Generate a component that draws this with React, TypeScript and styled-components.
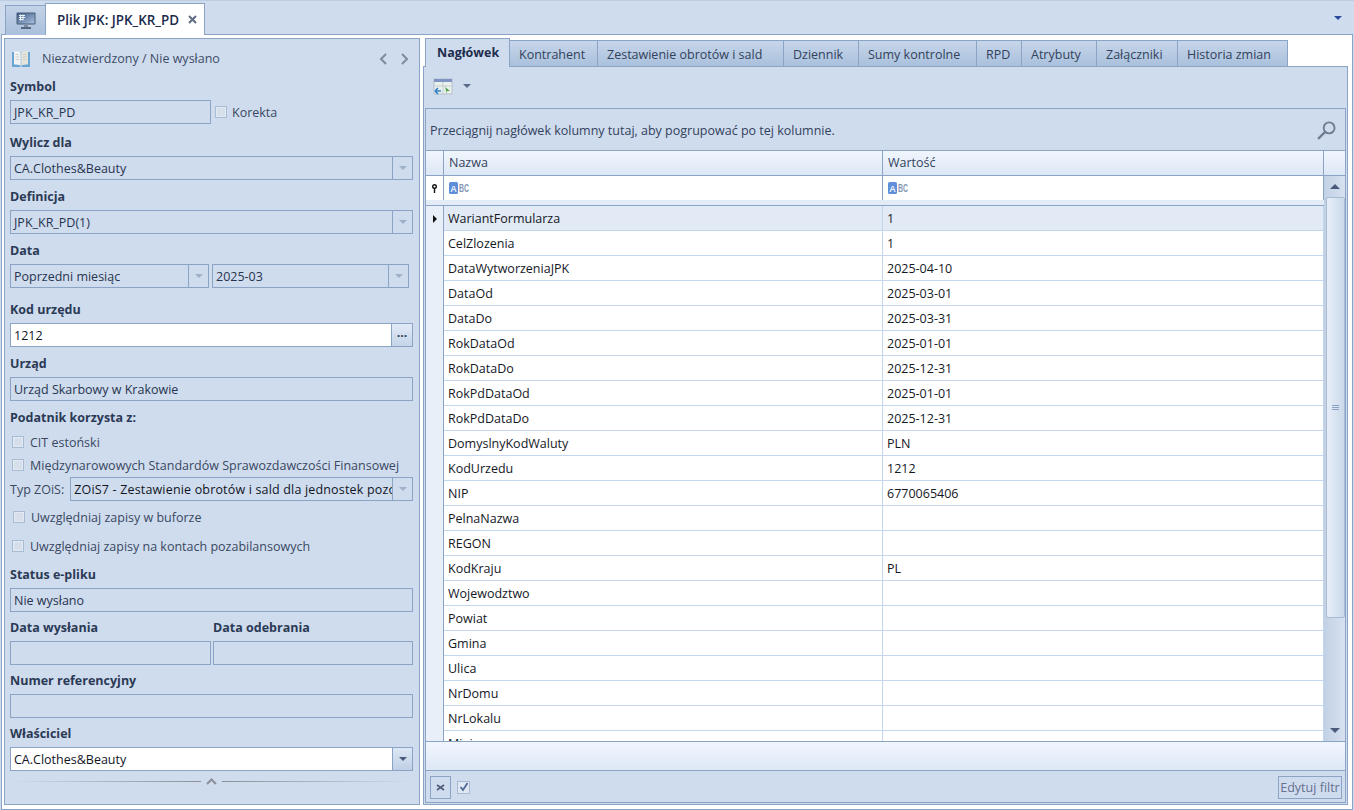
import React from "react";
import styled, { createGlobalStyle } from "styled-components";

const Global = createGlobalStyle`
  html, body { margin: 0; padding: 0; background: #cfdcee; }
  body { font-family: "Open Sans", "Noto Sans", sans-serif; font-size: 12.5px; color: #33425c; }
  * { box-sizing: border-box; }
`;

const LINE = "#8ba3c4";

const Page = styled.div`
  width: 1354px;
  height: 810px;
  overflow: hidden;
  border-top: 1px solid #bccde4;
  background: #cfdcee;
  display: flex;
  flex-direction: column;
`;

const TopStrip = styled.div`
  height: 34px;
  flex: none;
  display: flex;
  align-items: flex-end;
  padding: 0 10px 0 5px;
  margin-bottom: -1px;
  position: relative;
  z-index: 1;
`;

const HomeTab = styled.div`
  width: 41px;
  height: 30px;
  border: 1px solid ${LINE};
  border-bottom: none;
  background: linear-gradient(#c3d3e8, #a9bfdb);
  display: flex;
  align-items: center;
  justify-content: center;
`;

const DocTab = styled.div`
  width: 160px;
  height: 32px;
  margin-left: -1px;
  border: 1px solid ${LINE};
  border-bottom: none;
  background: #fff;
  display: flex;
  align-items: center;
  padding: 0 7px 0 11px;
  font-weight: 600;
  font-size: 13.4px;
  color: #1d2c4c;
  justify-content: space-between;
`;

const StripArrow = styled.div`
  margin-left: auto;
  margin-bottom: 15px;
  margin-right: 2px;
  width: 0;
  height: 0;
  border: 4px solid transparent;
  border-top: 4px solid #2a4a9c;
  border-bottom: none;
`;

const Frame = styled.div`
  margin: 0 1px;
  width: 1352px;
  height: 776px;
  flex: none;
  border: 1px solid ${LINE};
  background: #fff;
  padding: 3px 4px 4px 2px;
  display: flex;
  gap: 3px;
`;

const LeftPanel = styled.div`
  width: 416px;
  border: 1px solid ${LINE};
  background: #cfdcee;
  padding: 0 6px 0 5px;
  display: flex;
  flex-direction: column;
`;

const PanelHead = styled.div`
  height: 37px;
  flex: none;
  display: flex;
  align-items: center;
  padding: 2px 4px 0 1px;
  gap: 11px;
  color: #3e4c66;
`;

const NavArrows = styled.div`
  margin-left: auto;
  display: flex;
  gap: 12px;
`;

const Field = styled.div<{ $mt?: number; $w?: number }>`
  margin-top: ${({ $mt }) => $mt ?? 0}px;
  ${({ $w }) => ($w ? `width: ${$w}px;` : "")}
  display: flex;
  flex-direction: column;
  gap: 4px;
`;

const FieldLabel = styled.div`
  height: 20px;
  line-height: 22px;
  font-weight: 700;
  color: #2b3a55;
`;

const Inline = styled.div<{ $gap?: number; $mt?: number }>`
  display: flex;
  align-items: center;
  gap: ${({ $gap }) => $gap ?? 0}px;
  margin-top: ${({ $mt }) => $mt ?? 0}px;
`;

const Box = styled.div<{ $w?: number; $white?: boolean }>`
  ${({ $w }) => ($w ? `width: ${$w}px; flex: none;` : "width: 100%; flex: 0 1 auto; min-width: 0;")}
  height: 24px;
  border: 1px solid ${LINE};
  background: ${({ $white }) => ($white ? "#fff" : "#cfdcee")};
  display: flex;
  align-items: stretch;
`;

const BoxText = styled.div<{ $dark?: boolean; $spread?: boolean }>`
  flex: 1;
  min-width: 0;
  padding: 0 3px;
  line-height: 24px;
  white-space: nowrap;
  overflow: hidden;
  color: ${({ $dark }) => ($dark ? "#10151f" : "#27344f")};
  letter-spacing: ${({ $spread }) => ($spread ? "0.17px" : "normal")};
`;

const DropBtn = styled.div<{ $active?: boolean }>`
  width: 20px;
  flex: none;
  border-left: 1px solid ${LINE};
  background: ${({ $active }) => ($active ? "linear-gradient(#dde7f4, #bfd0e6)" : "transparent")};
  display: flex;
  align-items: center;
  justify-content: center;
`;

const Caret = styled.span<{ $color?: string }>`
  width: 0;
  height: 0;
  border-left: 4px solid transparent;
  border-right: 4px solid transparent;
  border-top: 4px solid ${({ $color }) => $color ?? "#9fb0c9"};
`;

const Ellipsis = styled.div`
  width: 21px;
  flex: none;
  border-left: 1px solid ${LINE};
  background: linear-gradient(#e2eaf6, #c4d4e9);
  text-align: center;
  line-height: 17px;
  font-weight: 700;
  color: #2c3b58;
`;

const Check = styled.span`
  width: 12px;
  height: 12px;
  flex: none;
  border: 1px solid #a9bad3;
  background: #d6dfea;
  box-shadow: inset 0 0 0 1px #e4eaf2;
`;

const CheckRow = styled.div<{ $mt?: number; $indent?: number }>`
  height: 20px;
  margin-top: ${({ $mt }) => $mt ?? 0}px;
  padding-left: ${({ $indent }) => $indent ?? 1}px;
  display: flex;
  align-items: center;
  gap: 6px;
  color: #3a4862;
  white-space: nowrap;
`;

const Plain = styled.span<{ $ml?: number }>`
  flex: none;
  margin-left: ${({ $ml }) => $ml ?? 0}px;
  color: #3a4862;
  white-space: nowrap;
`;

const Columns = styled.div`
  display: flex;
  gap: 2px;
`;

const Splitter = styled.div`
  margin-top: 4px;
  height: 12px;
  flex: none;
  display: flex;
  align-items: center;
  gap: 5px;
`;

const SplitLine = styled.div<{ $dir: string }>`
  flex: 1;
  height: 1px;
  background: linear-gradient(${({ $dir }) => $dir}, #8c8f96, #cfdcee);
`;

const RightPanel = styled.div`
  flex: 1;
  min-width: 0;
  display: flex;
  flex-direction: column;
`;

const TabRow = styled.div`
  height: 29px;
  flex: none;
  display: flex;
  align-items: flex-end;
  padding-left: 2px;
  margin-bottom: -1px;
  position: relative;
  z-index: 1;
`;

const Tab = styled.div<{ $active?: boolean; $w: number }>`
  width: ${({ $w }) => $w}px;
  flex: none;
  height: ${({ $active }) => ($active ? 29 : 27)}px;
  border: 1px solid ${LINE};
  margin-right: -1px;
  display: flex;
  align-items: center;
  padding: ${({ $active }) => ($active ? "0 0 2px 11px" : "1px 0 0 9px")};
  white-space: nowrap;
  color: ${({ $active }) => ($active ? "#1d2c4c" : "#33425c")};
  font-weight: ${({ $active }) => ($active ? 700 : 400)};
  background: ${({ $active }) => ($active ? "#cfdcee" : "linear-gradient(#c7d6ea, #a9c0dc)")};
  ${({ $active }) => ($active ? "border-bottom: none;" : "")}
`;

const TabPane = styled.div`
  flex: 1;
  min-height: 0;
  border: 1px solid ${LINE};
  background: #cfdcee;
  padding: 0 1px 1px 1px;
  display: flex;
  flex-direction: column;
`;

const Toolbar = styled.div`
  height: 41px;
  flex: none;
  display: flex;
  align-items: center;
  padding: 0 6px 3px 8px;
  gap: 10px;
`;

const GridBox = styled.div`
  flex: 1;
  min-height: 0;
  border: 1px solid ${LINE};
  display: flex;
  flex-direction: column;
  background: #fff;
`;

const GroupBar = styled.div`
  height: 42px;
  flex: none;
  background: #cfdcee;
  border-bottom: 1px solid ${LINE};
  display: flex;
  align-items: center;
  justify-content: space-between;
  padding: 2px 8px 0 4px;
`;

const HeaderRow = styled.div`
  height: 25px;
  flex: none;
  display: grid;
  grid-template-columns: 18px 439px 441px 21px;
  border-bottom: 1px solid ${LINE};
  background: linear-gradient(#f1f6fd, #dce7f5);
`;

const HeadCell = styled.div<{ $last?: boolean }>`
  border-right: ${({ $last }) => ($last ? "none" : `1px solid ${LINE}`)};
  padding-left: 5px;
  line-height: 24px;
`;

const BodyWrap = styled.div`
  flex: 1;
  min-height: 0;
  display: flex;
`;

const BodyMain = styled.div`
  flex: 1;
  min-width: 0;
  display: flex;
  flex-direction: column;
  overflow: hidden;
`;

const FilterRow = styled.div`
  height: 30px;
  flex: none;
  display: grid;
  grid-template-columns: 18px 439px 441px;
  border-bottom: 1px solid ${LINE};
  background: linear-gradient(#fff 24px, #e3ebf6 24px);
`;

const FilterCell = styled.div`
  height: 24px;
  border-right: 1px solid ${LINE};
  display: flex;
  align-items: center;
  padding-left: 5px;
`;

const PinCell = styled.div`
  height: 24px;
  border-right: 1px solid ${LINE};
  background: #fff;
  display: flex;
  align-items: center;
  justify-content: center;
`;

const Row = styled.div<{ $selected?: boolean }>`
  height: 25px;
  flex: none;
  display: grid;
  grid-template-columns: 18px 439px 441px;
  border-bottom: 1px solid #c3d6ee;
  background: ${({ $selected }) => ($selected ? "#e1eaf5" : "#fff")};
`;

const RowMark = styled.div`
  background: #e8eff8;
  border-right: 1px solid ${LINE};
  border-bottom: 1px solid ${LINE};
  margin-bottom: -1px;
  display: flex;
  align-items: center;
  justify-content: center;
`;

const Cell = styled.div`
  border-right: 1px solid #c3d6ee;
  padding-left: 4px;
  line-height: 26px;
  color: #14181f;
  white-space: nowrap;
`;

const MarkArrow = styled.span`
  width: 0;
  height: 0;
  border-top: 4px solid transparent;
  border-bottom: 4px solid transparent;
  border-left: 4px solid #111;
`;

const ScrollBar = styled.div`
  width: 21px;
  flex: none;
  border-left: 1px solid #c1cfe3;
  background: linear-gradient(90deg, #c4d2e6, #d6e1f0);
  display: flex;
  flex-direction: column;
  align-items: center;
`;

const ScrollEnd = styled.div`
  height: 21px;
  flex: none;
  display: flex;
  align-items: center;
  justify-content: center;
`;

const ScrollThumb = styled.div`
  width: 19px;
  height: 421px;
  flex: none;
  border: 1px solid #a9bcd6;
  border-radius: 2px;
  background: linear-gradient(90deg, #e7eef8, #cbd9eb);
  display: flex;
  align-items: center;
  justify-content: center;
`;

const Grip = styled.span`
  width: 7px;
  height: 5px;
  border-top: 1px solid #8ba3c4;
  border-bottom: 1px solid #8ba3c4;
  position: relative;
  &::after {
    content: "";
    position: absolute;
    left: 0;
    right: 0;
    top: 1px;
    height: 1px;
    background: #8ba3c4;
  }
`;

const ScrollSpace = styled.div`
  flex: 1;
`;

const Arrow = styled.span<{ $up?: boolean }>`
  width: 0;
  height: 0;
  border-left: 5px solid transparent;
  border-right: 5px solid transparent;
  ${({ $up }) => ($up ? "border-bottom: 5px solid #4a5a7c;" : "border-top: 5px solid #4a5a7c;")}
`;

const SummaryBar = styled.div`
  height: 30px;
  flex: none;
  border-top: 1px solid ${LINE};
  border-bottom: 1px solid ${LINE};
  background: linear-gradient(#f1f6fd, #dde8f6);
`;

const FilterBar = styled.div`
  height: 31px;
  flex: none;
  background: #cfdcee;
  display: flex;
  align-items: center;
  padding: 1px 3px 0 4px;
  gap: 5px;
`;

const ClearBtn = styled.div`
  width: 21px;
  height: 23px;
  border: 1px solid ${LINE};
  display: flex;
  align-items: center;
  justify-content: center;
`;

const FilterCheck = styled.div`
  width: 13px;
  height: 13px;
  margin-left: 1px;
  border: 1px solid #a9bad3;
  background: #dfe7f2;
  display: flex;
  align-items: center;
  justify-content: center;
`;

const EditBtn = styled.div`
  margin-left: auto;
  width: 64px;
  height: 23px;
  border: 1px solid ${LINE};
  text-align: center;
  line-height: 21px;
  color: #66708f;
  white-space: nowrap;
`;

const MonitorIcon = () => (
  <svg width="20" height="18" viewBox="0 0 20 18">
    <defs>
      <linearGradient id="screen" x1="0" y1="0" x2="1" y2="1">
        <stop offset="0" stopColor="#3f5c86" />
        <stop offset="1" stopColor="#a9c0df" />
      </linearGradient>
    </defs>
    <rect x="0.5" y="0.5" width="19" height="12" rx="1" fill="#4a5d78" />
    <rect x="1.5" y="1.5" width="17" height="10" fill="url(#screen)" />
    <path d="M3 3.5h6M3 5.5h6M3 7.5h4M4.5 2.5v6M7 2.5v6" stroke="#eef3f9" strokeWidth="1" />
    <path d="M8 13h4v2H8z" fill="#7c8ca3" />
    <path d="M5 15h10v2H5z" fill="#56677f" />
  </svg>
);

const BookIcon = () => (
  <svg width="20" height="18" viewBox="0 0 20 18">
    <path d="M1 2h8.5v15H1z" fill="#6aa6d4" />
    <path d="M10.5 2H19v15h-8.5z" fill="#6aa6d4" />
    <path d="M3 1.5 Q6.5 0.8 9.6 2.5 V15.5 Q6.5 14 3 14.5Z" fill="#f1f3f3" />
    <path d="M17 1.5 Q13.5 0.8 10.4 2.5 V15.5 Q13.5 14 17 14.5Z" fill="#e6e4d8" />
    <path d="M4.5 4.5h3.5M4.5 7h3.5M4.5 9.5h3.5M12 4.5h3.5M12 7h3.5M12 9.5h3.5" stroke="#c9ced2" />
  </svg>
);

const Chevron = ({ right }: { right?: boolean }) => (
  <svg width="9" height="12" viewBox="0 0 9 12">
    <path d={right ? "M2 1l5 5-5 5" : "M7 1L2 6l5 5"} fill="none" stroke="#7f8a9b" strokeWidth="2" />
  </svg>
);

const CloseIcon = () => (
  <svg width="9" height="9" viewBox="0 0 9 9">
    <path d="M1 1l7 7M8 1L1 8" stroke="#5e6c84" strokeWidth="2" />
  </svg>
);

const GridToolIcon = () => (
  <svg width="20" height="17" viewBox="0 0 20 17">
    <rect x="1" y="1" width="18" height="15" fill="#eaf0ea" stroke="#b5bfc8" />
    <rect x="1" y="1" width="18" height="3" fill="#7f93c4" />
    <path d="M1 8h18M10 4v12" stroke="#c4cdd6" />
    <path d="M2 13h6M2 13l3-3M2 13l3 3" stroke="#2f7fc9" strokeWidth="1.6" fill="none" />
    <path d="M12 9l5 4-3 0 0 3z" fill="#4fa04f" />
  </svg>
);

const AbcIcon = () => (
  <svg width="21" height="12" viewBox="0 0 21 12">
    <rect x="0" y="0" width="9" height="12" rx="1.5" fill="#5f8fd8" />
    <text x="4.5" y="9.5" fontSize="9" fontWeight="700" fontFamily="Liberation Sans" fill="#e8f0fb" textAnchor="middle">A</text>
    <text x="10" y="9.5" fontSize="10" fontWeight="700" fontFamily="Liberation Sans" fill="#8497b5" textLength="10" lengthAdjust="spacingAndGlyphs">BC</text>
  </svg>
);

const PinIcon = () => (
  <svg width="7" height="9" viewBox="0 0 7 9">
    <circle cx="3.5" cy="2.5" r="1.8" fill="#fff" stroke="#111" strokeWidth="1.4" />
    <path d="M3.5 4v5" stroke="#111" strokeWidth="1.4" />
  </svg>
);

const SearchIcon = () => (
  <svg width="21" height="21" viewBox="0 0 20 20">
    <circle cx="12.5" cy="7.5" r="5.2" fill="none" stroke="#6f7b90" strokeWidth="1.8" />
    <path d="M8.5 11.5L2 18" stroke="#6f7b90" strokeWidth="2.2" />
  </svg>
);

const ClearIcon = () => (
  <svg width="9" height="7" viewBox="0 0 9 7">
    <path d="M1 1l7 5M8 1L1 6" stroke="#4f5d78" strokeWidth="1.6" />
  </svg>
);

const TickIcon = () => (
  <svg width="10" height="10" viewBox="0 0 10 10">
    <path d="M1.5 5l2.5 3L8.5 1" fill="none" stroke="#4e6a96" strokeWidth="1.8" />
  </svg>
);

const UpChevron = () => (
  <svg width="11" height="7" viewBox="0 0 11 7">
    <path d="M1 6l4.5-4.5L10 6" fill="none" stroke="#8c9098" strokeWidth="2" />
  </svg>
);

const tabs = [
  { label: "Nagłówek", w: 85, active: true },
  { label: "Kontrahent", w: 89 },
  { label: "Zestawienie obrotów i sald", w: 187 },
  { label: "Dziennik", w: 76 },
  { label: "Sumy kontrolne", w: 119 },
  { label: "RPD", w: 46 },
  { label: "Atrybuty", w: 76 },
  { label: "Załączniki", w: 82 },
  { label: "Historia zmian", w: 111 },
];

const rows: [string, string][] = [
  ["WariantFormularza", "1"],
  ["CelZlozenia", "1"],
  ["DataWytworzeniaJPK", "2025-04-10"],
  ["DataOd", "2025-03-01"],
  ["DataDo", "2025-03-31"],
  ["RokDataOd", "2025-01-01"],
  ["RokDataDo", "2025-12-31"],
  ["RokPdDataOd", "2025-01-01"],
  ["RokPdDataDo", "2025-12-31"],
  ["DomyslnyKodWaluty", "PLN"],
  ["KodUrzedu", "1212"],
  ["NIP", "6770065406"],
  ["PelnaNazwa", ""],
  ["REGON", ""],
  ["KodKraju", "PL"],
  ["Wojewodztwo", ""],
  ["Powiat", ""],
  ["Gmina", ""],
  ["Ulica", ""],
  ["NrDomu", ""],
  ["NrLokalu", ""],
  ["Miejscowosc", ""],
];

export default function App() {
  return (
    <Page>
      <Global />
      <TopStrip>
        <HomeTab>
          <MonitorIcon />
        </HomeTab>
        <DocTab>
          Plik JPK: JPK_KR_PD
          <CloseIcon />
        </DocTab>
        <StripArrow />
      </TopStrip>
      <Frame>
        <LeftPanel>
          <PanelHead>
            <BookIcon />
            Niezatwierdzony / Nie wysłano
            <NavArrows>
              <Chevron />
              <Chevron right />
            </NavArrows>
          </PanelHead>

          <Field>
            <FieldLabel>Symbol</FieldLabel>
            <Inline $gap={4}>
              <Box $w={201}>
                <BoxText>JPK_KR_PD</BoxText>
              </Box>
              <Check />
              <Plain $ml={1}>Korekta</Plain>
            </Inline>
          </Field>

          <Field $mt={8}>
            <FieldLabel>Wylicz dla</FieldLabel>
            <Box>
              <BoxText>CA.Clothes&amp;Beauty</BoxText>
              <DropBtn><Caret /></DropBtn>
            </Box>
          </Field>

          <Field $mt={6}>
            <FieldLabel>Definicja</FieldLabel>
            <Box>
              <BoxText>JPK_KR_PD(1)</BoxText>
              <DropBtn><Caret /></DropBtn>
            </Box>
          </Field>

          <Field $mt={6}>
            <FieldLabel>Data</FieldLabel>
            <Inline $gap={3}>
              <Box $w={199}>
                <BoxText>Poprzedni miesiąc</BoxText>
                <DropBtn><Caret /></DropBtn>
              </Box>
              <Box $w={197}>
                <BoxText>2025-03</BoxText>
                <DropBtn><Caret /></DropBtn>
              </Box>
            </Inline>
          </Field>

          <Field $mt={11}>
            <FieldLabel>Kod urzędu</FieldLabel>
            <Box $white>
              <BoxText $dark>1212</BoxText>
              <Ellipsis>...</Ellipsis>
            </Box>
          </Field>

          <Field $mt={6}>
            <FieldLabel>Urząd</FieldLabel>
            <Box>
              <BoxText>Urząd Skarbowy w Krakowie</BoxText>
            </Box>
          </Field>

          <Field $mt={6}>
            <FieldLabel>Podatnik korzysta z:</FieldLabel>
          </Field>
          <CheckRow $mt={5} $indent={2}>
            <Check />
            CIT estoński
          </CheckRow>
          <CheckRow $mt={3} $indent={2}>
            <Check />
            Międzynarowowych Standardów Sprawozdawczości Finansowej
          </CheckRow>
          <Inline $gap={6} $mt={2}>
            <Plain>Typ ZOiS:</Plain>
            <Box>
              <BoxText $dark $spread>ZOiS7 - Zestawienie obrotów i sald dla jednostek pozostałych</BoxText>
              <DropBtn><Caret /></DropBtn>
            </Box>
          </Inline>
          <CheckRow $mt={6} $indent={3}>
            <Check />
            Uwzględniaj zapisy w buforze
          </CheckRow>
          <CheckRow $mt={9} $indent={2}>
            <Check />
            Uwzględniaj zapisy na kontach pozabilansowych
          </CheckRow>

          <Field $mt={8}>
            <FieldLabel>Status e-pliku</FieldLabel>
            <Box>
              <BoxText>Nie wysłano</BoxText>
            </Box>
          </Field>

          <Columns>
            <Field $mt={5} $w={201}>
              <FieldLabel>Data wysłania</FieldLabel>
              <Box />
            </Field>
            <Field $mt={5} $w={200}>
              <FieldLabel>Data odebrania</FieldLabel>
              <Box />
            </Field>
          </Columns>

          <Field $mt={5}>
            <FieldLabel>Numer referencyjny</FieldLabel>
            <Box />
          </Field>

          <Field $mt={5}>
            <FieldLabel>Właściciel</FieldLabel>
            <Box $white>
              <BoxText $dark>CA.Clothes&amp;Beauty</BoxText>
              <DropBtn $active><Caret $color="#4a5a7c" /></DropBtn>
            </Box>
          </Field>

          <Splitter>
            <SplitLine $dir="270deg" />
            <UpChevron />
            <SplitLine $dir="90deg" />
          </Splitter>
        </LeftPanel>

        <RightPanel>
          <TabRow>
            {tabs.map((t) => (
              <Tab key={t.label} $w={t.w} $active={t.active}>
                {t.label}
              </Tab>
            ))}
          </TabRow>
          <TabPane>
            <Toolbar>
              <GridToolIcon />
              <Caret $color="#5a6a88" />
            </Toolbar>
            <GridBox>
              <GroupBar>
                Przeciągnij nagłówek kolumny tutaj, aby pogrupować po tej kolumnie.
                <SearchIcon />
              </GroupBar>
              <HeaderRow>
                <HeadCell />
                <HeadCell>Nazwa</HeadCell>
                <HeadCell>Wartość</HeadCell>
                <HeadCell $last />
              </HeaderRow>
              <BodyWrap>
                <BodyMain>
                  <FilterRow>
                    <PinCell><PinIcon /></PinCell>
                    <FilterCell><AbcIcon /></FilterCell>
                    <FilterCell><AbcIcon /></FilterCell>
                  </FilterRow>
                  {rows.map(([name, value], i) => (
                    <Row key={name} $selected={i === 0}>
                      <RowMark>{i === 0 && <MarkArrow />}</RowMark>
                      <Cell>{name}</Cell>
                      <Cell>{value}</Cell>
                    </Row>
                  ))}
                </BodyMain>
                <ScrollBar>
                  <ScrollEnd><Arrow $up /></ScrollEnd>
                  <ScrollThumb><Grip /></ScrollThumb>
                  <ScrollSpace />
                  <ScrollEnd><Arrow /></ScrollEnd>
                </ScrollBar>
              </BodyWrap>
              <SummaryBar />
              <FilterBar>
                <ClearBtn><ClearIcon /></ClearBtn>
                <FilterCheck><TickIcon /></FilterCheck>
                <EditBtn>Edytuj filtr</EditBtn>
              </FilterBar>
            </GridBox>
          </TabPane>
        </RightPanel>
      </Frame>
    </Page>
  );
}
